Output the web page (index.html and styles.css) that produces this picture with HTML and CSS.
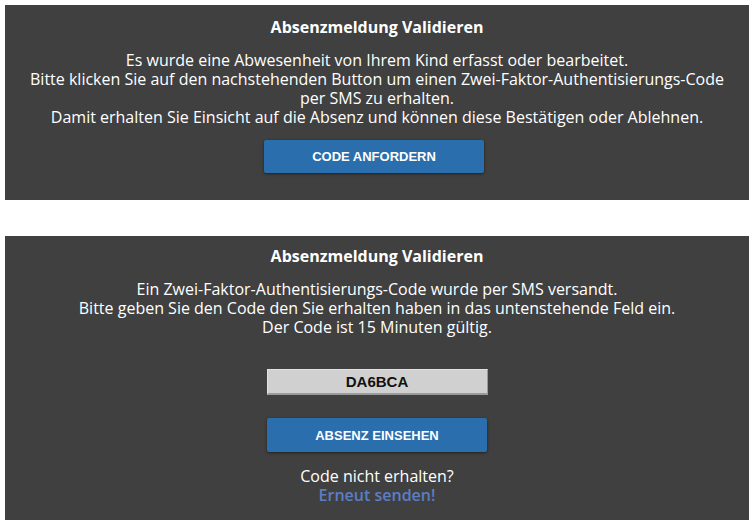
FILE: index.html
```html
<!DOCTYPE html>
<html lang="de">

<head>
    <meta charset="UTF-8">
    <meta name="viewport" content="width=device-width, initial-scale=1.0">
    <title>Absenzmeldung Validieren</title>
    <link rel="stylesheet" href="styles.css">
</head>

<body>
    <!-- Schritt 1: Code anfordern -->
    <div class="panel panel-request">
        <h2 class="panel-title">Absenzmeldung Validieren</h2>
        <p class="panel-text">
            Es wurde eine Abwesenheit von Ihrem Kind erfasst oder bearbeitet.<br>
            Bitte klicken Sie auf den nachstehenden Button um einen Zwei-Faktor-Authentisierungs-Code per SMS zu erhalten.<br>
            Damit erhalten Sie Einsicht auf die Absenz und können diese Bestätigen oder Ablehnen.
        </p>
        <button class="btn" id="requestButton">CODE ANFORDERN</button>
    </div>

    <!-- Schritt 2: Code eingeben -->
    <div class="panel panel-verify">
        <h2 class="panel-title">Absenzmeldung Validieren</h2>
        <p class="panel-text">
            Ein Zwei-Faktor-Authentisierungs-Code wurde per SMS versandt.<br>
            Bitte geben Sie den Code den Sie erhalten haben in das untenstehende Feld ein.<br>
            Der Code ist 15 Minuten gültig.
        </p>
        <input type="text" class="code-input" id="code" value="DA6BCA">
        <button class="btn btn-wide" id="viewButton">ABSENZ EINSEHEN</button>
        <div class="resend">
            Code nicht erhalten?<br>
            <a href="#" class="resend-link">Erneut senden!</a>
        </div>
    </div>
</body>

</html>
```

FILE: styles.css
```css
body {
    font-family: "Open Sans", "Noto Sans", sans-serif;
    margin: 0;
    padding: 5px 6px 8px 5px;
    background-color: #ffffff;
    color: #ffffff;
}

.panel {
    background-color: #404040;
    display: flex;
    flex-direction: column;
    align-items: center;
    text-align: center;
}

.panel-request {
    height: 195px;
    padding-top: 11px;
    box-sizing: border-box;
}

.panel-verify {
    margin-top: 36px;
    height: 284px;
    padding-top: 9px;
    box-sizing: border-box;
}

.panel-title {
    font-size: 16px;
    font-weight: bold;
    margin: 0 0 13px 0;
    line-height: 22px;
}

.panel-text {
    font-size: 16px;
    line-height: 19px;
    margin: 0;
    max-width: 712px;
}

/* Buttons */
.btn {
    font-family: "Liberation Sans", Arial, sans-serif;
    font-size: 13px;
    font-weight: bold;
    color: #ffffff;
    background-color: #2a6ead;
    border: none;
    border-radius: 2px;
    box-shadow: 0 1px 3px rgba(0, 0, 0, 0.5);
    width: 220px;
    height: 33px;
    margin-top: 13px;
    cursor: pointer;
}

.panel-request .btn {
    margin-right: 6px;
}

.btn:hover {
    background-color: #245f96;
}

.btn-wide {
    height: 34px;
    margin-top: 23px;
}

.code-input {
    font-family: "Liberation Sans", Arial, sans-serif;
    font-size: 15px;
    font-weight: bold;
    color: #111111;
    text-align: center;
    background-color: #d0d0d0;
    border: 1px solid #e2e2e2;
    border-right-color: #9a9a9a;
    border-bottom: 2px solid #9a9a9a;
    width: 221px;
    height: 26px;
    padding: 0;
    margin-top: 32px;
    box-sizing: border-box;
}

.resend {
    font-size: 16px;
    line-height: 19px;
    margin-top: 15px;
}

.resend-link {
    color: #5b7ec4;
    font-weight: 600;
    text-decoration: none;
}
```
